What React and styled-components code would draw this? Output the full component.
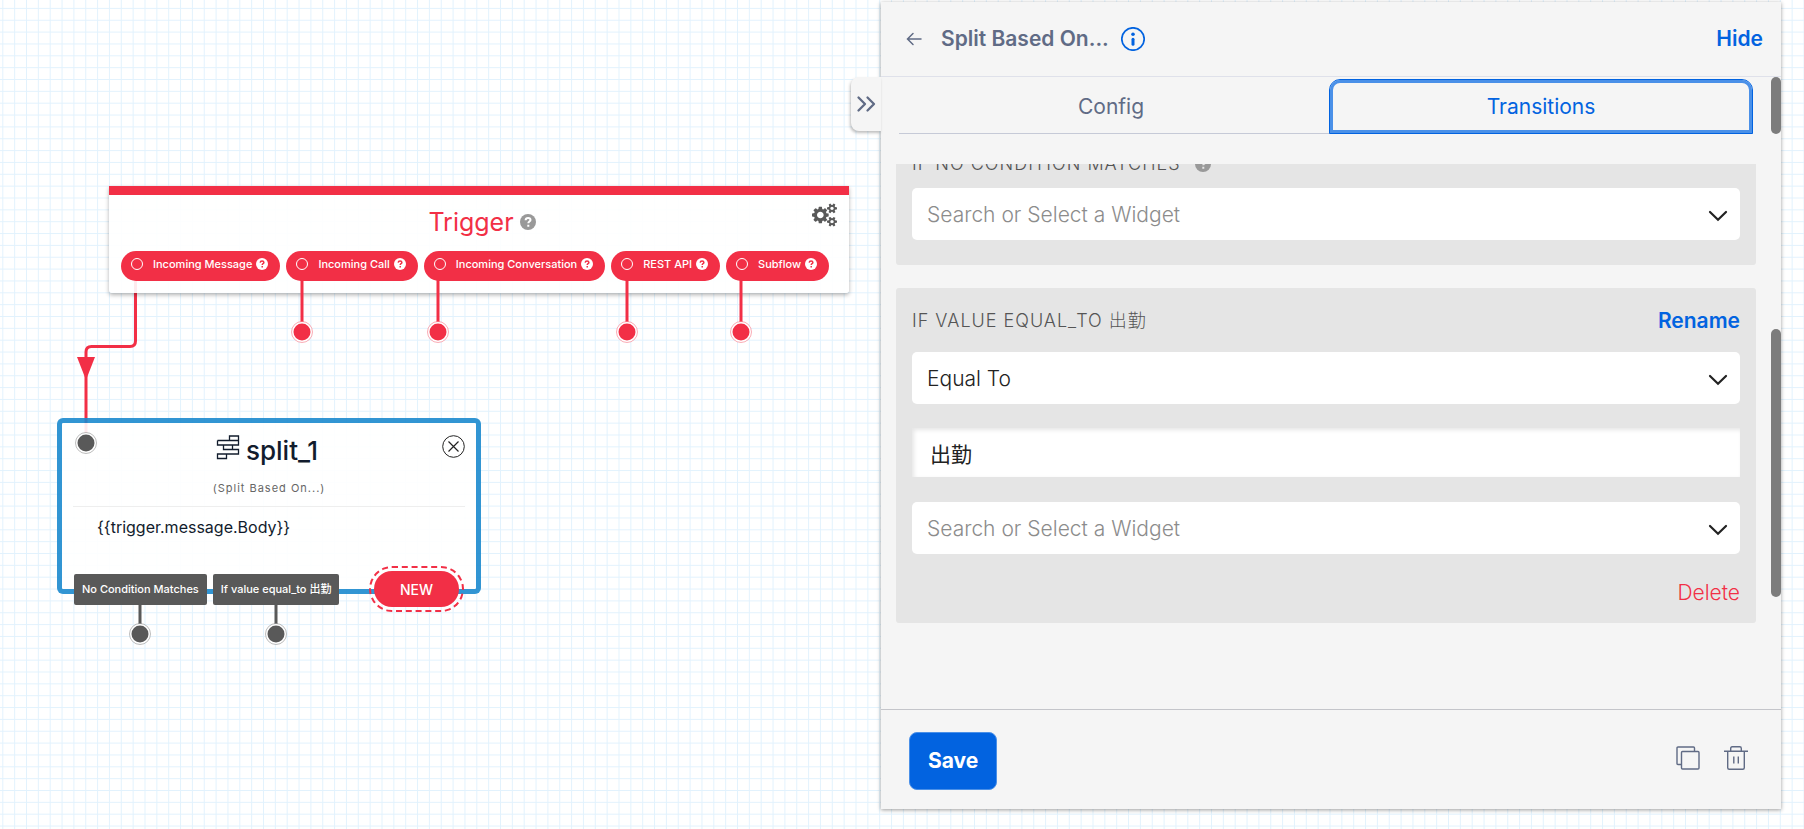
import React, { useLayoutEffect, useRef, useState } from 'react';
import styled, { createGlobalStyle } from 'styled-components';

const RED = '#f22f46';
const GRAY = '#595959';
const BLUE = '#0263e0';
const SLATE = '#606b85';

const GlobalStyle = createGlobalStyle`
  *, *::before, *::after {
    box-sizing: border-box;
  }

  body {
    margin: 0;
    background: #ffffff;
    color: #121c2d;
    font-family: Inter, "Noto Sans CJK JP", sans-serif;
  }

  button, input, select {
    font-family: inherit;
  }
`;

const Page = styled.div`
  position: relative;
  display: grid;
  grid-template-columns: minmax(0, 1fr) minmax(480px, calc(50vw - 2px));
  height: 100vh;
  padding: 2px 23px 20px 0;
  overflow: hidden;
`;

const Grid = styled.svg`
  position: absolute;
  top: 0;
  left: 0;
  width: 100%;
  height: 100%;
`;

/* Canvas */

const Canvas = styled.main`
  position: relative;
`;

// wires share the coordinate system of the page, like the nodes
const Layer = styled.svg`
  position: absolute;
  top: -2px;
  left: 0;
  overflow: visible;
  pointer-events: none;
`;

const TriggerNode = styled.section`
  position: absolute;
  top: 184px;
  left: 109px;
  width: 740px;
  padding: 13px 12px 12px;
  border-top: 9px solid ${RED};
  border-radius: 0 0 3px 3px;
  background: rgba(255, 255, 255, 0.9);
  box-shadow: 0 2px 4px rgba(0, 0, 0, 0.3);
`;

const TriggerTitle = styled.h2`
  display: flex;
  align-items: center;
  justify-content: center;
  gap: 6px;
  margin: 0 0 15px;
  padding-left: 6px;
  color: ${RED};
  font-size: 25px;
  font-weight: 400;
  line-height: 28px;
`;

const Gears = styled.button`
  position: absolute;
  top: 8px;
  right: 12px;
  display: flex;
  padding: 0;
  border: 0;
  background: none;
  color: ${GRAY};
`;

const Pills = styled.div`
  display: flex;
  gap: 6px;
`;

const Pill = styled.div`
  display: flex;
  align-items: center;
  height: 30px;
  padding: 0 12px 4px 10px;
  border-radius: 15px;
  background: ${RED};
  color: #ffffff;
  font-size: 11px;
  font-weight: 500;
  line-height: 16px;
  white-space: nowrap;

  svg {
    margin-left: 4px;
  }
`;

const Ring = styled.span`
  width: 12px;
  height: 12px;
  margin-right: 10px;
  border: 1px solid #ffffff;
  border-radius: 50%;
`;

const SplitNode = styled.section`
  position: absolute;
  top: 416px;
  left: 57px;
  width: 424px;
  height: 176px;
  padding: 11px 11px 0;
  border: 5px solid rgba(28, 137, 206, 0.9);
  border-radius: 6px;
  background: rgba(255, 255, 255, 0.9);
  background-clip: padding-box;
`;

const SplitTitle = styled.h2`
  display: flex;
  justify-content: center;
  gap: 6px;
  margin: 0;
  padding-right: 4px;
  font-size: 26px;
  font-weight: 500;
  line-height: 34px;
`;

const SplitType = styled.p`
  margin: 11px 0 0;
  padding-bottom: 9px;
  border-bottom: 1px solid #eeeeee;
  color: #666666;
  font-size: 11px;
  letter-spacing: 1px;
  line-height: 18px;
  text-align: center;
`;

const SplitValue = styled.p`
  margin: 8px 0 0 24px;
  font-size: 16px;
  line-height: 24px;
`;

const Close = styled.button`
  position: absolute;
  top: 12px;
  right: 11px;
  display: flex;
  padding: 0;
  border: 0;
  background: none;
  color: #222222;
`;

// sits on the bottom border of the node
const Exits = styled.div`
  position: absolute;
  right: 12px;
  bottom: -23px;
  left: 12px;
  display: flex;
  align-items: center;
  gap: 6px;
`;

const Exit = styled.span`
  padding: 0 8px;
  border-radius: 2px;
  background: ${GRAY};
  color: #ffffff;
  font-size: 11px;
  font-weight: 500;
  line-height: 31px;
  white-space: nowrap;
`;

const NewExit = styled.div`
  margin-left: auto;
  padding: 3px;
  border: 2px dashed ${RED};
  border-radius: 23px;
`;

const NewButton = styled.button`
  display: block;
  width: 85px;
  height: 36px;
  padding: 0;
  border: 0;
  border-radius: 18px;
  background: ${RED};
  color: #ffffff;
  font-size: 14px;
  font-weight: 500;
`;

/* Panel */

const Panel = styled.aside`
  position: relative;
  display: flex;
  flex-direction: column;
  min-height: 0;
  background: #f5f5f5;
  box-shadow: 0 1px 4px rgba(0, 0, 0, 0.4);
`;

const Header = styled.header`
  display: flex;
  align-items: center;
  height: 75px;
  padding: 0 18px 0 24px;
  border-bottom: 1px solid #dfe1ea;
`;

const IconButton = styled.button`
  display: flex;
  padding: 0;
  border: 0;
  background: none;
  color: ${props => props.$color || SLATE};
`;

const Title = styled.h1`
  margin: 0 12px 0 18px;
  color: ${SLATE};
  font-size: 21px;
  font-weight: 600;
  line-height: 28px;
`;

const TextButton = styled.button`
  margin-left: auto;
  padding: 0;
  border: 0;
  background: none;
  color: ${props => props.$color || BLUE};
  font-size: 21px;
  font-weight: ${props => props.$weight || 600};
  line-height: 28px;
`;

const Collapse = styled.button`
  position: absolute;
  top: 75px;
  left: -30px;
  display: flex;
  align-items: center;
  width: 30px;
  height: 54px;
  padding: 0 0 0 5px;
  border: 0;
  border-radius: 8px 0 0 8px;
  background: #f5f5f5;
  box-shadow: -1px 2px 3px rgba(0, 0, 0, 0.25);
  color: ${SLATE};
`;

const TabRow = styled.div`
  display: flex;
  height: 57px;
`;

const TabList = styled.div`
  display: grid;
  flex: 1;
  grid-template-columns: 1fr 1fr;
  gap: 6px;
  margin: 2px 18px 0;
  box-shadow: inset 0 -1px 0 #c6cad7;
`;

const Tab = styled.button`
  padding: 0;
  border: 1px solid ${props => (props.$active ? BLUE : 'transparent')};
  border-radius: 11px 11px 0 0;
  background: none;
  box-shadow: ${props => (props.$active ? 'inset 0 0 0 3px #4a90e8' : 'none')};
  color: ${props => (props.$active ? BLUE : SLATE)};
  font-size: 21px;
  font-weight: 400;
  outline: none;
`;

const Rail = styled.div`
  display: flex;
  flex: 0 0 10px;
  flex-direction: column;
`;

const Thumb = styled.div`
  flex: ${props => props.$size} 0 0;
  border-radius: 5px;
  background: #7c7c7c;
`;

const Space = styled.div`
  flex: ${props => props.$size} 0 0;
`;

const ScrollRow = styled.div`
  display: flex;
  flex: 1;
  min-height: 0;
  margin-top: 30px;
`;

const Scroller = styled.div`
  flex: 1;
  padding: 0 15px 86px;
  overflow-y: auto;
  scrollbar-width: none;
`;

const Card = styled.section`
  margin-bottom: 23px;
  padding: 19px 16px 25px;
  border-radius: 3px;
  background: #e5e5e5;

  &:last-child {
    margin-bottom: 0;
    padding-bottom: 16px;
  }
`;

const CardHeader = styled.div`
  display: flex;
  align-items: center;
  gap: 14px;
  margin-bottom: ${props => (props.$compact ? '10px' : '17px')};
  color: #999999;
`;

const CardTitle = styled.h3`
  margin: 0;
  color: #555555;
  font-size: 18px;
  font-weight: 300;
  letter-spacing: 1px;
  line-height: 28px;
  text-transform: uppercase;
`;

const Field = styled.div`
  position: relative;
  margin-bottom: ${props => (props.$last ? 0 : '24px')};

  svg {
    position: absolute;
    top: 22px;
    right: 12px;
    pointer-events: none;
  }
`;

const Select = styled.select`
  display: block;
  width: 100%;
  height: 52px;
  padding: 0 48px 0 15px;
  border: 0;
  border-radius: 5px;
  appearance: none;
  background: #ffffff;
  color: ${props => (props.$empty ? '#8c8c8c' : '#222222')};
  font-size: 21px;
  font-weight: 300;
`;

const ValueInput = styled.input`
  display: block;
  width: 100%;
  height: 49px;
  margin-bottom: 25px;
  padding: 0 18px;
  border: 0;
  border-radius: 0;
  background: #ffffff;
  box-shadow: inset 2px 2px 4px rgba(0, 0, 0, 0.1);
  color: #222222;
  font-size: 21px;
  font-weight: 400;
`;

const CardFooter = styled.div`
  display: flex;
  margin-top: 25px;
`;

const Footer = styled.footer`
  display: flex;
  align-items: center;
  justify-content: space-between;
  height: 100px;
  padding: 2px 33px 0 28px;
  border-top: 1px solid #c4c5ca;
`;

const Actions = styled.div`
  display: flex;
  gap: 24px;
  padding-bottom: 5px;
`;

const SaveButton = styled.button`
  height: 58px;
  padding: 0 18px;
  border: 1px solid #4a90e8;
  border-radius: 8px;
  background: ${BLUE};
  color: #ffffff;
  font-size: 21px;
  font-weight: 700;
`;

const HelpIcon = ({ size, mark }) => (
  <svg width={size} height={size} viewBox="0 0 16 16" aria-hidden="true">
    <circle cx="8" cy="8" r="8" fill="currentColor" />
    <path
      d="M5.600 6.200c.1-1.500 1.100-2.300 2.500-2.300s2.400.8 2.400 2c0 1.600-2.200 1.700-2.200 3.300M8.300 10.700v2"
      fill="none"
      stroke={mark}
      strokeWidth="2"
    />
  </svg>
);

const GearsIcon = () => (
  <svg width="25" height="24" viewBox="0 0 1920 1792" fill="currentColor" aria-hidden="true">
    <path d="M896 896q0-106-75-181t-181-75-181 75-75 181 75 181 181 75 181-75 75-181zm768 512q0-52-38-90t-90-38-90 38-38 90q0 53 37.500 90.500t90.500 37.500 90.500-37.500 37.500-90.500zm0-1024q0-52-38-90t-90-38-90 38-38 90q0 53 37.500 90.500t90.500 37.500 90.500-37.500 37.500-90.500zm-384 421v185q0 10-7 19.500t-16 10.500l-155 24q-11 35-32 76 34 48 90 115 7 11 7 20 0 12-7 19-23 30-82.500 89.500t-78.500 59.500q-11 0-21-7l-115-90q-37 19-77 31-11 108-23 155-7 24-30 24h-186q-11 0-20-7.500t-10-17.500l-23-153q-34-10-75-31l-118 89q-7 7-20 7-11 0-21-8-144-133-144-160 0-9 7-19 10-14 41-53t47-61q-23-44-35-82l-152-24q-10-1-17-9.500t-7-19.500v-185q0-10 7-19.500t16-10.500l155-24q11-35 32-76-34-48-90-115-7-11-7-20 0-12 7-20 22-30 82-89t79-59q11 0 21 7l115 90q34-18 77-32 11-108 23-154 7-24 30-24h186q11 0 20 7.500t10 17.500l23 153q34 10 75 31l118-89q8-7 20-7 11 0 21 8 144 133 144 160 0 8-7 19-12 16-42 54t-45 60q23 48 34 82l152 23q10 2 17 10.500t7 19.500zm640 533v140q0 16-149 31-12 27-30 52 51 113 51 138 0 4-4 7-122 71-124 71-8 0-46-47t-52-68q-20 2-30 2t-30-2q-14 21-52 68t-46 47q-2 0-124-71-4-3-4-7 0-25 51-138-18-25-30-52-149-15-149-31v-140q0-16 149-31 13-29 30-52-51-113-51-138 0-4 4-7 4-2 35-20t59-34 30-16q8 0 46 46.500t52 67.500q20-2 30-2t30 2q51-71 92-112l6-2q4 0 124 70 4 3 4 7 0 25-51 138 17 23 30 52 149 15 149 31zm0-1024v140q0 16-149 31-12 27-30 52 51 113 51 138 0 4-4 7-122 71-124 71-8 0-46-47t-52-68q-20 2-30 2t-30-2q-14 21-52 68t-46 47q-2 0-124-71-4-3-4-7 0-25 51-138-18-25-30-52-149-15-149-31v-140q0-16 149-31 13-29 30-52-51-113-51-138 0-4 4-7 4-2 35-20t59-34 30-16q8 0 46 46.500t52 67.500q20-2 30-2t30 2q51-71 92-112l6-2q4 0 124 70 4 3 4 7 0 25-51 138 17 23 30 52 149 15 149 31z" />
  </svg>
);

const SplitIcon = () => (
  <svg width="24" height="26" viewBox="0 0 24 26" fill="none" stroke="currentColor" strokeWidth="1.300" aria-hidden="true">
    <path d="M13.500 2h9v4.500h-9zM1.500 6.500h12M1.500 6.500v4.500h15M7.500 11h9v4.500h-9zM16.500 11h6v-4.500M7.500 15.500h15v4.500h-21M1.500 20h9v4.500h-9z" />
  </svg>
);

const CloseIcon = () => (
  <svg width="23" height="23" viewBox="0 0 23 23" fill="none" stroke="currentColor" aria-hidden="true">
    <circle cx="11.500" cy="11.500" r="10.800" />
    <path d="M6.500 6.500l10 10M16.500 6.500l-10 10" strokeWidth="1.200" />
  </svg>
);

const ArrowIcon = () => (
  <svg width="18" height="14" viewBox="0 0 18 14" fill="none" stroke="currentColor" strokeWidth="1.500" strokeLinecap="round" aria-hidden="true">
    <path d="M16 7H3M8 1.500L2.500 7L8 12.500" />
  </svg>
);

const InfoIcon = () => (
  <svg width="24" height="24" viewBox="0 0 24 24" aria-hidden="true">
    <circle cx="12" cy="12" r="11.200" fill="none" stroke="currentColor" strokeWidth="1.700" />
    <circle cx="12" cy="7.300" r="1.800" fill="currentColor" />
    <path d="M12 12.300v5" stroke="currentColor" strokeWidth="3" strokeLinecap="round" />
  </svg>
);

const DoubleChevronIcon = () => (
  <svg width="20" height="18" viewBox="0 0 20 18" fill="none" stroke="currentColor" strokeWidth="2.300" strokeLinecap="round" strokeLinejoin="round" aria-hidden="true">
    <path d="M2.500 2.500L9 9L2.500 15.500M11.500 2.500L18 9L11.500 15.500" />
  </svg>
);

const ChevronIcon = () => (
  <svg width="20" height="12" viewBox="0 0 20 12" fill="none" stroke="#222222" strokeWidth="2.200" strokeLinecap="round" aria-hidden="true">
    <path d="M2 2L10 9.700L18 2" />
  </svg>
);

const CopyIcon = () => (
  <svg width="24" height="24" viewBox="0 0 24 24" fill="none" stroke="currentColor" strokeWidth="1.400" aria-hidden="true">
    <path d="M5.500 18.500H2q-1 0-1-1V2q0-1 1-1h15.500q1 0 1 1v3.500" />
    <rect x="5.500" y="5.500" width="17.500" height="17.500" rx="1" />
  </svg>
);

const TrashIcon = () => (
  <svg width="24" height="24" viewBox="0 0 24 24" fill="none" stroke="currentColor" strokeWidth="1.400" aria-hidden="true">
    <path d="M0 5.200h24M3.700 5.200v16.500q0 1.500 1.500 1.500h13.600q1.500 0 1.500-1.500V5.200M6.700 5.200V2.500q0-1.700 1.500-1.700h7.600q1.500 0 1.500 1.700v2.700M9.800 10.500v7M14.300 10.500v7" />
  </svg>
);

const Dot = ({ x, y, color }) => (
  <g>
    <circle cx={x} cy={y} r="10.500" fill="#ffffff" stroke={color} strokeOpacity="0.4" />
    <circle cx={x} cy={y} r="8.500" fill={color} />
  </g>
);

const TRIGGERS = ['Incoming Message', 'Incoming Call', 'Incoming Conversation', 'REST API', 'Subflow'];
const TRIGGER_ENDS = [302, 438, 627, 741];
const EXITS = ['No Condition Matches', 'If value equal_to 出勤'];
const EXIT_ENDS = [140, 276];

const SelectField = ({ label, value, empty, last }) => (
  <Field $last={last}>
    <Select aria-label={label} $empty={empty} defaultValue={value}>
      <option>{value}</option>
    </Select>
    <ChevronIcon />
  </Field>
);

const App = () => {
  const [tab, setTab] = useState('Transitions');
  const scroller = useRef(null);

  useLayoutEffect(() => {
    scroller.current.scrollTop = 33;
  }, []);

  return (
    <Page>
      <GlobalStyle />
      <Grid aria-hidden="true">
        <defs>
          <pattern id="grid" x="2.300" y="7.900" width="11.850" height="11.850" patternUnits="userSpaceOnUse">
            <path d="M0 0.500H11.850M0.500 0V11.850" stroke="#e2f2fd" />
          </pattern>
        </defs>
        <rect width="100%" height="100%" fill="url(#grid)" />
      </Grid>

      <Canvas>
        <Layer width="1" height="1" aria-hidden="true">
          <path
            d="M135.500 270V341q0 5.500-5.500 5.500H91.500q-5.500 0-5.500 5.500V440"
            fill="none"
            stroke={RED}
            strokeWidth="3"
          />
          <path d="M77 357h18l-9 23z" fill={RED} />
        </Layer>

        <TriggerNode>
          <TriggerTitle>
            Trigger
            <IconButton $color="#999999" aria-label="About triggers">
              <HelpIcon size={16} mark="#ffffff" />
            </IconButton>
          </TriggerTitle>
          <Gears aria-label="Flow settings"><GearsIcon /></Gears>
          <Pills>
            {TRIGGERS.map(name => (
              <Pill key={name}>
                <Ring />
                {name}
                <HelpIcon size={12} mark={RED} />
              </Pill>
            ))}
          </Pills>
        </TriggerNode>

        <SplitNode>
          <SplitTitle><SplitIcon />split_1</SplitTitle>
          <Close aria-label="Remove widget"><CloseIcon /></Close>
          <SplitType>(Split Based On...)</SplitType>
          <SplitValue>{'{{trigger.message.Body}}'}</SplitValue>
          <Exits>
            {EXITS.map(name => <Exit key={name}>{name}</Exit>)}
            <NewExit><NewButton>NEW</NewButton></NewExit>
          </Exits>
        </SplitNode>

        <Layer width="1" height="1" aria-hidden="true">
          {TRIGGER_ENDS.map(x => (
            <g key={x}>
              <path d={`M${x} 280V324`} stroke={RED} strokeWidth="3" />
              <Dot x={x} y={332} color={RED} />
            </g>
          ))}
          {EXIT_ENDS.map(x => (
            <g key={x}>
              <path d={`M${x} 603V626`} stroke={GRAY} strokeWidth="3" />
              <Dot x={x} y={634} color={GRAY} />
            </g>
          ))}
          <Dot x={86} y={443} color={GRAY} />
        </Layer>
      </Canvas>

      <Panel>
        <Header>
          <IconButton aria-label="Back"><ArrowIcon /></IconButton>
          <Title>Split Based On...</Title>
          <IconButton $color={BLUE} aria-label="Widget info"><InfoIcon /></IconButton>
          <TextButton>Hide</TextButton>
        </Header>
        <Collapse aria-label="Collapse panel"><DoubleChevronIcon /></Collapse>

        <TabRow>
          <TabList role="tablist">
            {['Config', 'Transitions'].map(name => (
              <Tab
                key={name}
                role="tab"
                aria-selected={tab === name}
                $active={tab === name}
                onClick={() => setTab(name)}
              >
                {name}
              </Tab>
            ))}
          </TabList>
          <Rail><Thumb $size={1} /></Rail>
        </TabRow>

        <ScrollRow>
          <Scroller ref={scroller}>
            <Card>
              <CardHeader $compact>
                <CardTitle>If no condition matches</CardTitle>
                <HelpIcon size={16} mark="#e5e5e5" />
              </CardHeader>
              <SelectField label="If no condition matches" value="Search or Select a Widget" empty last />
            </Card>
            <Card>
              <CardHeader>
                <CardTitle>If value equal_to 出勤</CardTitle>
                <TextButton>Rename</TextButton>
              </CardHeader>
              <SelectField label="Condition" value="Equal To" />
              <ValueInput aria-label="Value" defaultValue="出勤" />
              <SelectField label="Next widget" value="Search or Select a Widget" empty last />
              <CardFooter>
                <TextButton $color={RED} $weight={300}>Delete</TextButton>
              </CardFooter>
            </Card>
          </Scroller>
          <Rail>
            <Space $size={165} />
            <Thumb $size={268} />
            <Space $size={112} />
          </Rail>
        </ScrollRow>

        <Footer>
          <SaveButton>Save</SaveButton>
          <Actions>
            <IconButton aria-label="Duplicate"><CopyIcon /></IconButton>
            <IconButton aria-label="Delete widget"><TrashIcon /></IconButton>
          </Actions>
        </Footer>
      </Panel>
    </Page>
  );
};

export default App;
